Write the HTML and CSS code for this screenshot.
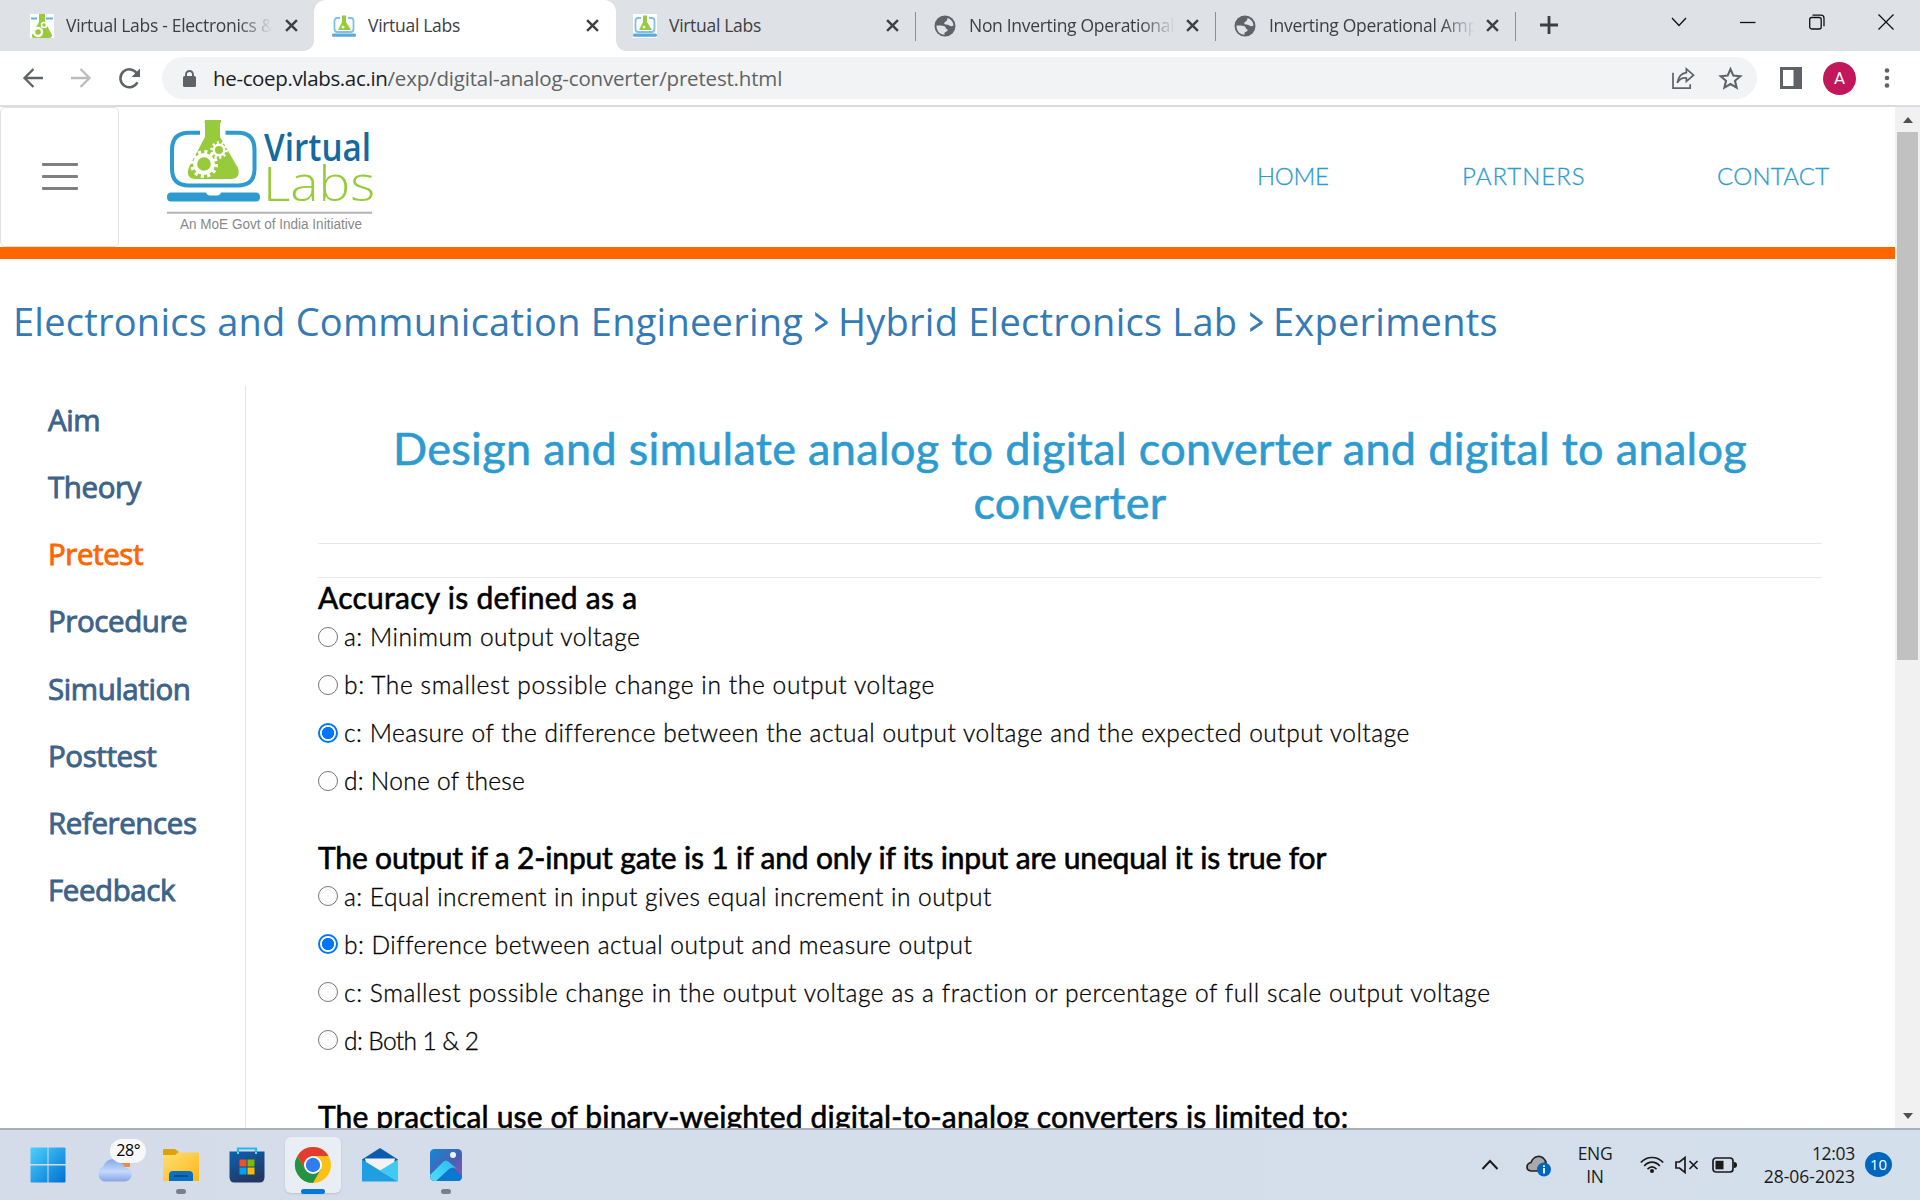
FILE: index.html
```html
<!DOCTYPE html>
<html lang="en">
<head>
<meta charset="utf-8">
<title>Virtual Labs</title>
<link rel="stylesheet" href="styles.css">
</head>
<body>
<svg class="defs" width="0" height="0" aria-hidden="true">
  <defs>
    <symbol id="close" viewBox="0 0 12 12"><path d="M1 1 11 11M11 1 1 11" stroke="#3c4043" stroke-width="2.2" fill="none"/></symbol>
    <symbol id="globe" viewBox="0 0 24 24"><circle cx="12" cy="12" r="10.500" fill="#5f6368"/><path d="M3.500 11.500c3 0 6-.3 8 .8 1.500.8 1 2.200 2 2.700 1 .4 1.500 1 .8 2-1 1-2.800.8-2.800 2.200v1.600C7 20.600 3.300 17 3.500 11.500ZM14.500 4c3.300 1 5.800 4 6 7.500-1.500 1-3 1-4.200 0-1-1-2.300-1-3.600-1-1.700 0-2-2-.7-2.600 1.500-.6 2.500-2 2.500-3.900Z" fill="#dee1e6"/></symbol>
    <symbol id="labicon" viewBox="0 0 24 24"><rect width="24" height="24" fill="#fff"/><path d="M8 4H5Q2.500 4 2.500 7v8q0 3 3 3h13q3 0 3-3V7q0-3-2.500-3h-3" fill="none" stroke="#7cc2e6" stroke-width="1.800"/><path d="M10 1.500h4V8l5 8H6l4-8Z" fill="#97cb3b"/><circle cx="11" cy="13" r="1.500" fill="#eef7de"/><rect y="19.500" width="24" height="3.200" rx="1.500" fill="#5aaadb"/></symbol>
    <linearGradient id="win" x2="1" y2="1"><stop stop-color="#4cd0ff"/><stop offset="1" stop-color="#0071cf"/></linearGradient>
    <linearGradient id="cloud" x2="0" y2="1"><stop stop-color="#84a8ea"/><stop offset=".55" stop-color="#c3d9f9"/><stop offset="1" stop-color="#86a5e8"/></linearGradient>
    <linearGradient id="fold" x2="1" y2="1"><stop stop-color="#ffdf77"/><stop offset="1" stop-color="#fbb716"/></linearGradient>
    <linearGradient id="bag" x2=".5" y2="1"><stop stop-color="#0c62b2"/><stop offset="1" stop-color="#243763"/></linearGradient>
    <linearGradient id="sky" x2="1" y2="1"><stop stop-color="#1688d2"/><stop offset=".55" stop-color="#4760b5"/><stop offset="1" stop-color="#9a4fb4"/></linearGradient>
    <linearGradient id="peak" x1="1" x2="0" y2="1"><stop stop-color="#28b8ec"/><stop offset="1" stop-color="#4fe0fb"/></linearGradient>
  </defs>
</svg>

<header class="tabs">
  <div class="tab tab-first">
    <svg class="fav" viewBox="0 0 24 24"><rect width="24" height="24" fill="#fff"/><path d="M1 4.500h6M16 4.500h7" stroke="#5db2df" stroke-width="2"/><path d="M9 0h6v8l7 13q0 3-3 3H4q-3 0-2-3L9 8Z" fill="#97cb3b"/><circle cx="8" cy="18" r="4" fill="none" stroke="#fff" stroke-width="2.400"/><circle cx="14" cy="11" r="2.500" fill="none" stroke="#fff" stroke-width="1.600"/></svg>
    <span class="tab-text fade">Virtual Labs - Electronics &amp;</span><svg class="x"><use href="#close"/></svg>
  </div>
  <div class="tab tab-active">
    <svg class="fav"><use href="#labicon"/></svg><span class="tab-text">Virtual Labs</span><svg class="x"><use href="#close"/></svg>
  </div>
  <div class="tab"><svg class="fav"><use href="#labicon"/></svg><span class="tab-text">Virtual Labs</span><svg class="x"><use href="#close"/></svg></div>
  <div class="tab"><svg class="fav"><use href="#globe"/></svg><span class="tab-text fade">Non Inverting Operational</span><svg class="x"><use href="#close"/></svg></div>
  <div class="tab"><svg class="fav"><use href="#globe"/></svg><span class="tab-text fade">Inverting Operational Amp</span><svg class="x"><use href="#close"/></svg></div>
  <svg class="plus" viewBox="0 0 18 18"><path d="M9 0v18M0 9h18" stroke="#3c4043" stroke-width="2.800"/></svg>
  <div class="win-controls">
    <svg width="16" height="10"><path d="M1 1l7 7.500L15 1" /></svg>
    <svg width="16" height="10"><path d="M0 5.500h15.500" /></svg>
    <svg width="16" height="16"><rect x=".7" y="3.500" width="11.500" height="11.500" rx="2"/><path d="M3.500 1.200H12q3 0 3 3v8"/></svg>
    <svg width="16" height="16"><path d="M.5.500l15 15M15.500.500l-15 15"/></svg>
  </div>
</header>

<div class="toolbar">
  <svg class="nav-icon" viewBox="0 0 20 20"><path d="M20 10H2M10.500 1 1.500 10l9 9" fill="none" stroke="#5f6368" stroke-width="2.300"/></svg>
  <svg class="nav-icon fwd" viewBox="0 0 20 20"><path d="M0 10h18M9.500 1l9 9-9 9" fill="none" stroke="#babcbe" stroke-width="2.300"/></svg>
  <svg class="nav-icon reload" viewBox="0 0 20 20"><path d="M17.500 13.500A8.500 8.500 0 1 1 17 5.200" fill="none" stroke="#5f6368" stroke-width="2.400"/><path d="M20 .5V8.500h-8Z" fill="#5f6368"/></svg>
  <div class="omnibox">
    <svg class="lock" viewBox="0 0 13 17"><path d="M3 7V4.500a3.500 3.500 0 0 1 7 0V7" fill="none" stroke="#5f6368" stroke-width="1.900"/><rect y="6" width="13" height="11" rx="1.500" fill="#5f6368"/></svg>
    <p class="url"><span class="host">he-coep.vlabs.ac.in</span><span class="path">/exp/digital-analog-converter/pretest.html</span></p>
    <svg class="share" viewBox="0 0 24 22" fill="none" stroke="#5f6368" stroke-width="1.800"><path d="M1 5v16h18v-4"/><path d="M15 1l7.500 6.500L15 14v-3.500C11 10 8 11.500 5.500 15.500 6.500 9.500 9.500 5.500 15 4.800Z"/></svg>
    <svg class="star" viewBox="0 0 24 24"><path d="M12 3l2.700 6.200 6.700.6-5.100 4.400 1.600 6.600L12 17.300l-5.900 3.500 1.600-6.600-5.100-4.400 6.700-.6Z" fill="none" stroke="#5f6368" stroke-width="2"/></svg>
  </div>
  <svg class="panel" viewBox="0 0 22 22"><path d="M0 0h22v22H0ZM3 3v16h10.500V3Z" fill="#5f6368" fill-rule="evenodd"/></svg>
  <span class="avatar">A</span>
  <svg class="dots" viewBox="0 0 6 20" fill="#5f6368"><circle cx="3" cy="2.500" r="2.300"/><circle cx="3" cy="10" r="2.300"/><circle cx="3" cy="17.500" r="2.300"/></svg>
</div>

<div class="viewport">
  <div class="page">
    <div class="site-head">
      <div class="burger"><i></i><i></i><i></i></div>
      <svg class="logo" viewBox="0 0 207 120">
        <path d="M33 18.700H22Q5 18.700 5 36v19Q5 71.500 22 71.500h49Q87.500 71.500 87.500 55V36Q87.500 18.700 71 18.700H58.500" fill="none" stroke="#2e9bd0" stroke-width="4"/>
        <path d="M4 78.500h35q1 3 4 3h7q3 0 4-3h35q4 0 4 4.500t-4 4.500H4q-4 0-4-4.500t4-4.500Z" fill="#2e9bd0"/>
        <path d="M38 6h16v3h-1v14l18 31q3 10-6 11H28q-10-1-6-12l16-30V9h-.5Z" fill="#97cb3b"/>
        <circle cx="37" cy="50" r="8.800" fill="none" stroke="#fff" stroke-width="4"/>
        <circle cx="37" cy="50" r="12" fill="none" stroke="#fff" stroke-width="4" stroke-dasharray="3 3.280"/>
        <circle cx="52" cy="36" r="5.300" fill="none" stroke="#fff" stroke-width="2.600"/>
        <circle cx="52" cy="36" r="7.500" fill="none" stroke="#fff" stroke-width="2.600" stroke-dasharray="2.100 2.610"/>
        <text class="logo-virtual" x="97" y="47" textLength="107" lengthAdjust="spacingAndGlyphs">Virtual</text>
        <text class="logo-labs" x="96" y="87" textLength="112" lengthAdjust="spacingAndGlyphs">Labs</text>
        <path d="M0 98.800h205" stroke="#b5b5b5" stroke-width="2"/>
        <text class="logo-sub" x="13" y="115" textLength="182" lengthAdjust="spacingAndGlyphs">An MoE Govt of India Initiative</text>
      </svg>
      <nav class="site-nav"><a class="n-home">HOME</a><a class="n-partners">PARTNERS</a><a class="n-contact">CONTACT</a></nav>
    </div>
    <div class="crumbs"><a class="c-dept">Electronics and Communication Engineering</a><span class="sep">&gt;</span><a class="c-lab">Hybrid Electronics Lab</a><span class="sep">&gt;</span><a class="c-exp">Experiments</a></div>
    <div class="columns">
      <ul class="side">
        <li>Aim</li><li>Theory</li><li class="current">Pretest</li><li>Procedure</li><li>Simulation</li><li>Posttest</li><li>References</li><li>Feedback</li>
      </ul>
      <main class="content">
        <h1>Design and simulate analog to digital converter and digital to analog<br>converter</h1>
        <div class="rules"></div>
        <section>
          <h2 class="q1">Accuracy is defined as a</h2>
          <label class="ls-50"><i class="radio"></i>a: Minimum output voltage</label>
          <label class="ls-63"><i class="radio"></i>b: The smallest possible change in the output voltage</label>
          <label class="ls-52"><i class="radio on"></i>c: Measure of the difference between the actual output voltage and the expected output voltage</label>
          <label class="ls-28"><i class="radio"></i>d: None of these</label>
        </section>
        <section>
          <h2 class="q2">The output if a 2-input gate is 1 if and only if its input are unequal it is true for</h2>
          <label class="ls-48"><i class="radio"></i>a: Equal increment in input gives equal increment in output</label>
          <label class="ls-50"><i class="radio on"></i>b: Difference between actual output and measure output</label>
          <label class="ls-58"><i class="radio"></i>c: Smallest possible change in the output voltage as a fraction or percentage of full scale output voltage</label>
          <label class="ls-tight"><i class="radio"></i>d: Both 1 &amp; 2</label>
        </section>
        <section><h2 class="q3">The practical use of binary-weighted digital-to-analog converters is limited to:</h2></section>
      </main>
    </div>
  </div>
  <div class="scrollbar"><b class="up"></b><span class="thumb"></span><b class="down"></b></div>
</div>

<footer class="taskbar">
  <div class="apps">
    <div class="app"><svg width="36" height="36" viewBox="0 0 36 36"><path d="M1.500.500h16v16.500h-17V1.500q0-1 1-1ZM18.500.500h16q1 0 1 1v15.500h-17ZM.5 18.500h17v17h-16q-1 0-1-1ZM18.500 18.500h17v16q0 1-1 1h-16Z" fill="url(#win)"/></svg></div>
    <div class="app weather"><svg width="36" height="26" viewBox="0 0 36 26"><path d="M25 3h9v8h-9Z" fill="#f08a3c"/><path d="M8 25.500a8 8 0 0 1-.5-15A10 10 0 0 1 25 7q3 1 3.500 4.500a7 7 0 0 1 .5 14Z" fill="url(#cloud)"/></svg><span class="temp">28°</span></div>
    <div class="app open"><svg width="36" height="34" viewBox="0 0 36 34"><path d="M0 9V2q0-1 1-1h11l4 3-3 5Z" fill="#dfa008"/><path d="M0 7h12l3-2.500h20q1 0 1 1V33H0Z" fill="url(#fold)"/><path d="M6 33v-6q0-4 4-4h16q4 0 4 4v6Z" fill="#0b6fc0"/><path d="M11 28h14" stroke="#0a4c8d" stroke-width="2"/></svg></div>
    <div class="app"><svg width="36" height="36" viewBox="0 0 36 36"><path d="M9 6V1.500h18V6" fill="none" stroke="#22b9ee" stroke-width="2.200"/><path d="M.5 4.500h35V30q0 5.500-5 5.500h-25q-5 0-5-5.500Z" fill="url(#bag)"/><path d="M9 7V4.500M27 7V4.500" stroke="#4edcff" stroke-width="2"/><path d="M10.500 12.500h7v7h-7Z" fill="#f25022"/><path d="M18.500 12.500h7v7h-7Z" fill="#7fba00"/><path d="M10.500 20.500h7v7h-7Z" fill="#00a4ef"/><path d="M18.500 20.500h7v7h-7Z" fill="#ffb900"/></svg></div>
    <div class="app active"><svg width="36" height="36" viewBox="0 0 36 36"><circle cx="18" cy="18" r="18" fill="#fbc116"/><path d="M18 9h15.600A18 18 0 0 0 2.400 9l7.800 13.500L18 18Z" fill="#e33b2e"/><path d="M2.400 9A18 18 0 0 0 18 36l7.800-13.500L18 18l-7.800 4.500Z" fill="#229342"/><circle cx="18" cy="18" r="9" fill="#fff"/><circle cx="18" cy="18" r="7.200" fill="#2f7cee"/></svg></div>
    <div class="app"><svg width="36" height="34" viewBox="0 0 36 34"><path d="M0 11.500 18 0l18 11.500V16H0Z" fill="#0a5dae"/><path d="M3 10.500h30L31 20 18 24 5 20Z" fill="#f3f3f4"/><path d="M0 11.500 36 33.500H0Z" fill="#1f9fe2"/><path d="M36 11.500 18 22.500l18 11Z" fill="#40c9f5"/></svg></div>
    <div class="app open"><svg width="32" height="32" viewBox="0 0 32 32"><rect width="32" height="32" rx="4.500" fill="url(#sky)"/><path d="M6 32 19 20q3-2 5 0l8 7q0 5-4 5Z" fill="#0b78cf"/><path d="M0 26 13 13q3-3 6 0l8 7q-4-3-8 0L6 32Q0 32 0 26Z" fill="url(#peak)"/><circle cx="23" cy="6" r="3" fill="#f2f4fb"/></svg></div>
  </div>
  <div class="tray">
    <svg class="t-chev" width="18" height="12" viewBox="0 0 18 12"><path d="M1.500 10 9 2l7.500 8" fill="none" stroke="#1b1b1b" stroke-width="2"/></svg>
    <svg class="t-cloud" width="25" height="22" viewBox="0 0 25 22"><path d="M5 16q-4-.5-4-4t4-4.500Q7 2 12 1.500t8 5.500l-8 9Z" fill="#a9a9a9" stroke="#222" stroke-width="1.700"/><circle cx="18" cy="14.500" r="7" fill="#0067c0"/><path d="M18 13v5.500M18 10.300v1.800" stroke="#fff" stroke-width="1.800"/></svg>
    <div class="lang"><span>ENG</span><span>IN</span></div>
    <svg class="t-wifi" width="24" height="18" viewBox="0 0 24 18" fill="none" stroke="#1b1b1b" stroke-width="1.700"><path d="M.8 6.500Q5.500 1.500 12 1.500t11.200 5M4.200 10Q7.500 6.200 12 6.200t7.800 3.800M7.500 13.200q2-2.300 4.500-2.300t4.500 2.300"/><circle cx="12" cy="15" r="1.200" fill="#1b1b1b"/></svg>
    <svg class="t-vol" width="24" height="18" viewBox="0 0 24 18" fill="none" stroke="#1b1b1b" stroke-width="1.700"><path d="M1 6h3.500l5.500-4.500v15L4.500 12H1ZM14.500 5l8 8M22.500 5l-8 8"/></svg>
    <svg class="t-bat" width="25" height="16" viewBox="0 0 25 16"><rect x="1" y="1" width="20" height="14" rx="3" fill="none" stroke="#1b1b1b" stroke-width="1.700"/><rect x="3.500" y="3.800" width="8" height="8.500" fill="#1b1b1b"/><path d="M22 5q3 0 3 3t-3 3Z" fill="#1b1b1b"/></svg>
    <div class="clock"><span class="time">12:03</span><span>28-06-2023</span></div>
    <span class="badge">10</span>
  </div>
</footer>
</body>
</html>
```
FILE: styles.css
```css
* { box-sizing: border-box; }
body { margin: 0; width: 1920px; height: 1200px; overflow: hidden; display: flex; flex-direction: column; background: #fff; font-family: "Open Sans", sans-serif; color: #000; }
svg { display: block; flex: none; overflow: visible; }
.defs { position: absolute; }
h1, h2, p, ul { margin: 0; padding: 0; }

/* Tab strip */
.tabs { height: 51px; background: #dee1e6; display: flex; flex: none; }
.tab { width: 300px; height: 51px; display: flex; align-items: center; padding-left: 17px; position: relative; }
.tab-first { width: 314px; padding-left: 30px; }
.tab-active { width: 302px; padding-left: 18px; background: #fff; border-radius: 12px 12px 0 0; }
.tab-active::before, .tab-active::after { content: ""; position: absolute; bottom: 0; width: 10px; height: 10px; }
.tab-active::before { left: -10px; background: radial-gradient(circle at 0 0, #dee1e6 9.5px, #fff 10px); }
.tab-active::after { right: -10px; background: radial-gradient(circle at 100% 0, #dee1e6 9.5px, #fff 10px); }
.tab:nth-child(n+3)::after { content: ""; position: absolute; right: 0; top: 12px; width: 1px; height: 29px; background: #8b8f94; }
.fav { width: 24px; height: 24px; margin-right: 12px; }
.tab-text { width: 208px; font-size: 17.5px; line-height: 24px; letter-spacing: -.3px; color: #3c4043; white-space: nowrap; overflow: hidden; padding-bottom: 1px; }
.fade { -webkit-mask-image: linear-gradient(90deg, #000 172px, transparent 206px); mask-image: linear-gradient(90deg, #000 172px, transparent 206px); }
.x { width: 13px; height: 13px; margin-left: 9px; }
.tab-first .x { margin-left: 11px; }
.tab-active .x { margin-left: 10px; }
.plus { width: 18px; height: 18px; margin: 16px 0 0 24px; }
.win-controls { display: flex; align-items: center; gap: 53px; height: 43px; margin-left: 113px; fill: none; stroke: #111; stroke-width: 1.3; }

/* Address bar */
.toolbar { height: 56px; flex: none; display: flex; align-items: center; border-bottom: 2px solid #dadce0; }
.nav-icon { width: 20px; height: 20px; margin-left: 23px; }
.fwd { margin-left: 28px; }
.reload { margin-left: 28px; width: 21px; height: 21px; }
.omnibox { width: 1595px; height: 42px; margin-left: 22px; padding-left: 21px; border-radius: 21px; background: #f1f3f4; display: flex; align-items: center; }
.lock { width: 13px; height: 17px; margin-right: 17px; }
.url { width: 1459px; font-size: 20.5px; line-height: 42px; color: #5f6368; white-space: nowrap; }
.host { color: #202124; letter-spacing: -.35px; }
.path { letter-spacing: -.18px; }
.share { width: 23px; height: 21px; margin: 0 23px 0 0; }
.star { width: 25px; height: 25px; }
.panel { width: 22px; height: 22px; margin-left: 23px; }
.avatar { width: 33px; height: 33px; margin-left: 21px; border-radius: 50%; background: #c2185b; color: #fff; font: 17px/33px Roboto, sans-serif; text-align: center; }
.dots { width: 6px; height: 20px; margin-left: 28px; }

/* Page viewport */
.viewport { height: 1021px; flex: none; display: flex; overflow: hidden; }
.page { width: 1895px; height: 1021px; overflow: hidden; }
.site-head { height: 152px; border-bottom: 12px solid #ff6600; display: flex; }
.burger { width: 119px; height: 140px; padding-bottom: 1px; border: 1px solid #e2e2e2; border-radius: 5px; display: flex; flex-direction: column; align-items: center; justify-content: center; gap: 9px; }
.burger i { width: 36px; height: 3px; border-radius: 1px; background: #808080; }
.logo { width: 207px; height: 120px; margin: 7px 0 0 48px; }
.logo-virtual { font: 600 38px "Open Sans", sans-serif; fill: #136a9f; }
.logo-labs { font: 300 47px "Open Sans", sans-serif; fill: #97cb3b; }
.logo-sub { font: 14px "Liberation Sans", sans-serif; fill: #888; }
.site-nav { display: flex; align-items: center; height: 138px; margin-left: 883px; font: 300 24px/30px Lato, sans-serif; color: #2e9bd0; -webkit-text-stroke: .3px #2e9bd0; }
.n-home { width: 205px; letter-spacing: -.3px; }
.n-partners { width: 255px; letter-spacing: 1px; }
.n-contact { letter-spacing: .24px; }

.crumbs { height: 127px; padding: 0 0 3px 13px; display: flex; align-items: center; font-size: 38px; line-height: 50px; color: #337ab7; white-space: nowrap; }
.crumbs a { letter-spacing: .24px; }
.c-dept { width: 792px; }
.c-lab { width: 402px; }
.sep { width: 33px; text-align: center; transform: scaleX(.66); -webkit-text-stroke: .7px currentColor; }

.columns { display: flex; height: 900px; }
.side { width: 246px; border-right: 1px solid #e4e4e4; padding-left: 48px; list-style: none; font-size: 29.5px; letter-spacing: -.42px; color: #3e6389; -webkit-text-stroke: .9px currentColor; }
.side li { height: 67.15px; line-height: 68px; }
.side .current { color: #ff6600; }
.content { width: 1576px; padding: 35px 0 0 72px; font-family: Lato, sans-serif; }
h1 { width: 1504px; font-size: 45px; line-height: 54px; font-weight: 400; letter-spacing: .33px; text-align: center; color: #2e9bd0; -webkit-text-stroke: .6px currentColor; white-space: nowrap; }
.rules { height: 35px; margin: 14px 0 2px; border-top: 1px solid #e8e8e8; border-bottom: 1px solid #e8e8e8; }
section { height: 259.5px; }
h2 { height: 33px; font-size: 30px; line-height: 35px; font-weight: 400; -webkit-text-stroke: .6px currentColor; white-space: nowrap; }
.q1 { letter-spacing: .27px; }
.q2 { letter-spacing: -.16px; }
.q3 { letter-spacing: .16px; }
label { height: 48px; display: flex; align-items: center; font-size: 24.5px; font-weight: 300; line-height: 48px; -webkit-text-stroke: .3px #000; white-space: nowrap; }
.radio { width: 20px; height: 20px; margin: -1px 6px 0 0; flex: none; border: 1.5px solid #767676; border-radius: 50%; }
.radio.on { border: 2px solid #0075ff; background: radial-gradient(circle, #0075ff 5.8px, #fff 6.5px); }
.ls-28 { letter-spacing: .28px; }
.ls-48 { letter-spacing: .48px; }
.ls-50 { letter-spacing: .5px; }
.ls-52 { letter-spacing: .52px; }
.ls-58 { letter-spacing: .58px; }
.ls-63 { letter-spacing: .63px; }
.ls-tight { letter-spacing: -.6px; }

.scrollbar { width: 25px; background: #f1f1f1; display: flex; flex-direction: column; align-items: center; }
.scrollbar b { width: 0; height: 0; border: 5px solid transparent; }
.scrollbar .up { border-bottom: 6px solid #505050; border-top: 0; margin: 10px 0 9px; }
.thumb { width: 21px; height: 528px; background: #c1c1c1; }
.scrollbar .down { border-top: 6px solid #505050; border-bottom: 0; margin: auto 0 9px; }

/* Taskbar */
.taskbar { height: 72px; flex: none; border-top: 2px solid #a9afb9; background: linear-gradient(90deg, #d5dce9, #d3deea 50%, #d3dfea); display: flex; justify-content: space-between; }
.apps { display: flex; padding-left: 15px; align-items: flex-start; }
.app { width: 66.3px; height: 70px; position: relative; display: flex; align-items: center; justify-content: center; }
.app > svg { position: relative; z-index: 1; }
.weather { align-items: flex-end; padding-bottom: 18px; }
.temp { position: absolute; z-index: 2; left: 29px; top: 9px; width: 36px; height: 24px; border-radius: 12px; background: #f6f8fa; font-size: 16px; line-height: 23px; text-align: center; letter-spacing: -.3px; }
.open::after { content: ""; position: absolute; left: 28px; bottom: 6px; width: 10px; height: 5px; border-radius: 3px; background: #7b7f87; }
.active::before { content: ""; position: absolute; left: 5px; top: 7px; width: 56px; height: 56px; border-radius: 6px; background: #e9eef5; box-shadow: 0 1px 2px #b9c2ce; }
.active::after { content: ""; position: absolute; left: 21px; bottom: 6px; width: 24px; height: 5px; border-radius: 3px; background: #0078d8; }
.tray { display: flex; align-items: center; height: 69px; padding-right: 28px; font-size: 17.5px; line-height: 23px; color: #1b1b1b; }
.t-chev { margin-left: 1px; }
.t-cloud { margin: 3px 0 0 27px; }
.lang { width: 40px; margin-left: 24px; display: flex; flex-direction: column; align-items: center; letter-spacing: -.3px; }
.t-wifi { margin-left: 25px; }
.t-vol { margin-left: 11px; }
.t-bat { margin-left: 13px; }
.clock { width: 118px; display: flex; flex-direction: column; align-items: flex-end; }
.time { letter-spacing: -.3px; }
.badge { width: 27px; height: 25px; margin-left: 10px; border-radius: 50%; background: #0067c0; color: #fff; font-size: 15px; line-height: 24px; text-align: center; }
```
